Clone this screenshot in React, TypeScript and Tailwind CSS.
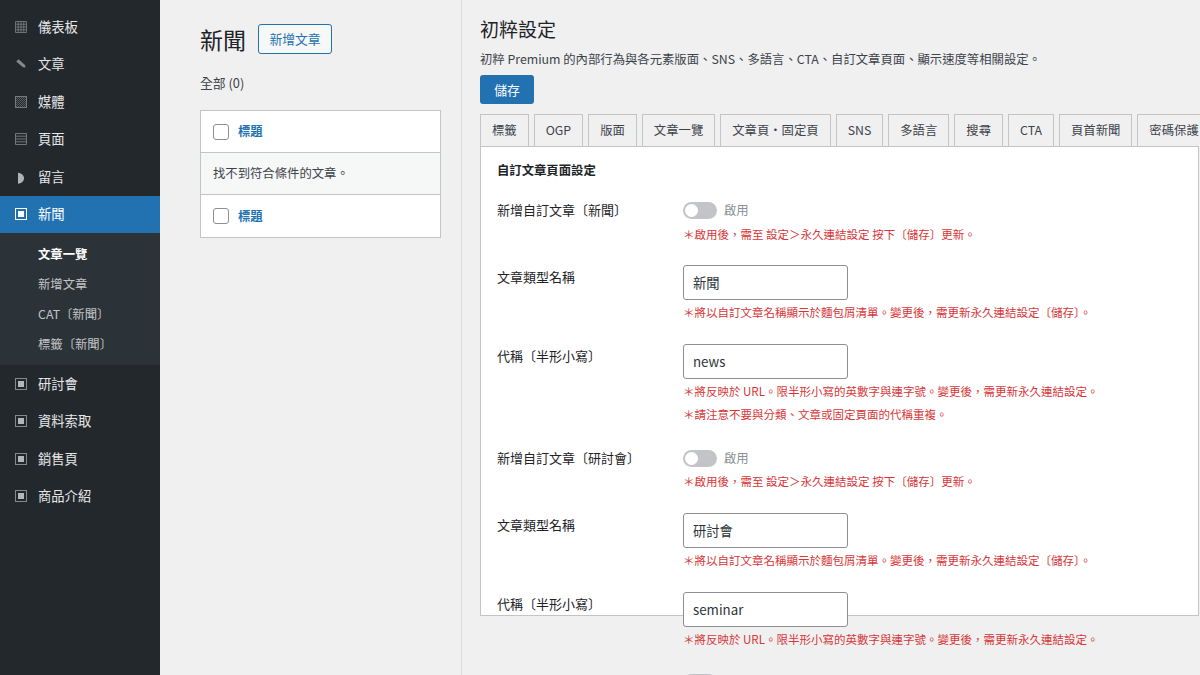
import React from 'react';

const FONT = "font-['Noto_Sans_CJK_TC','Noto_Sans',sans-serif]";

type IconKind = 'grid' | 'pen' | 'hatch' | 'lines' | 'half' | 'box';

const MenuIcon: React.FC<{ kind: IconKind; active?: boolean }> = ({ kind, active }) => {
  const c = active ? '#ffffff' : '#85888c';
  return (
    <svg width="12" height="12" viewBox="0 0 12 12" className="shrink-0 overflow-visible" fill="none">
      {kind === 'grid' && (
        <path
          d="M.5.5h11v11H.5zM.5 3.2h11M.5 6h11M.5 8.8h11M3.2.5v11M6 .5v11M8.8.5v11"
          stroke={c}
          opacity="0.75"
        />
      )}
      {kind === 'pen' && <path d="M1.2 3.6 3.6 1.2 10 7l.6 2.6L8 9.2z" fill={c} />}
      {kind === 'hatch' && (
        <>
          <rect x=".5" y=".5" width="11" height="11" stroke={c} opacity="0.8" />
          <path
            d="M0 2 2 0M0 4 4 0M0 6l6-6M0 8l8-8M0 10 10 0M1 11 11 1M2 12 12 2M4 12l8-8M6 12l6-6M8 12l4-4M10 12l2-2"
            stroke={c}
            strokeWidth="0.7"
            opacity="0.8"
          />
        </>
      )}
      {kind === 'lines' && (
        <path d="M.5.5h11v11H.5zM.5 3.2h11M.5 6h11M.5 8.8h11" stroke={c} opacity="0.8" />
      )}
      {kind === 'half' && <path d="M3 1.8C7 2.3 9 4.8 9 7.3s-2 5-6 5.5z" fill="#b0b3b6" />}
      {kind === 'box' && (
        <>
          <rect x=".5" y=".5" width="11" height="11" stroke={c} />
          <rect x="3" y="3" width="6" height="6" fill={active ? '#ffffff' : '#b4b7ba'} />
        </>
      )}
    </svg>
  );
};

const MenuItem: React.FC<{ label: string; kind: IconKind; active?: boolean }> = ({ label, kind, active }) => (
  <div
    className={`flex h-[37.5px] items-center pl-[15px] text-[13.3px] ${
      active ? 'bg-[#2271b1] text-white' : 'text-[#e6e7e8]'
    }`}
  >
    <MenuIcon kind={kind} active={active} />
    <span className="ml-[11px]">{label}</span>
  </div>
);

const Sidebar = () => (
  <aside className="h-full w-[160px] shrink-0 bg-[#23282d] pt-[8px]">
    <MenuItem label="儀表板" kind="grid" />
    <MenuItem label="文章" kind="pen" />
    <MenuItem label="媒體" kind="hatch" />
    <MenuItem label="頁面" kind="lines" />
    <MenuItem label="留言" kind="half" />
    <MenuItem label="新聞" kind="box" active />
    <div className="bg-[#2c3338] py-[6px] pl-[38px] text-[12.35px] text-[#c3c4c7]">
      <div className="flex h-[30px] items-center font-semibold text-white">文章一覽</div>
      <div className="flex h-[30px] items-center">新增文章</div>
      <div className="flex h-[30px] items-center">CAT〔新聞〕</div>
      <div className="flex h-[30px] items-center">標籤〔新聞〕</div>
    </div>
    <MenuItem label="研討會" kind="box" />
    <MenuItem label="資料索取" kind="box" />
    <MenuItem label="銷售頁" kind="box" />
    <MenuItem label="商品介紹" kind="box" />
  </aside>
);

const Checkbox = () => (
  <span className="h-[16px] w-[16px] rounded-[3px] border border-[#8c8f94] bg-white" />
);

const ListRow: React.FC<{ className?: string }> = ({ className }) => (
  <div className={`flex h-[42px] items-center gap-[9px] pl-[12px] ${className ?? ''}`}>
    <Checkbox />
    <span className="text-[12.35px] font-semibold text-[#2271b1]">標題</span>
  </div>
);

const NewsPane = () => (
  <section className="h-full w-[302px] shrink-0 border-r border-[#dcdcde] pl-[40px]">
    <div className="flex items-center pt-[24px]">
      <h1 className="text-[23px] leading-[29px] font-normal text-[#1d2327]">新聞</h1>
      <button className="ml-[12px] h-[30px] w-[74px] rounded-[3px] border border-[#2271b1] bg-[#f6f7f7] text-[12.8px] text-[#2271b1]">
        新增文章
      </button>
    </div>
    <p className="mt-[19px] text-[12.8px] leading-[20px] text-[#3c434a]">全部 (0)</p>
    <div className="mt-[17px] w-[241px] border border-[#c3c4c7] bg-white">
      <ListRow className="border-b border-[#c3c4c7]" />
      <div className="flex h-[42px] items-center border-b border-[#c3c4c7] bg-[#f6f7f7] pl-[12px] text-[12.35px] text-[#3c434a]">
        找不到符合條件的文章。
      </div>
      <ListRow />
    </div>
  </section>
);

const TABS = ['標籤', 'OGP', '版面', '文章一覽', '文章頁・固定頁', 'SNS', '多語言', '搜尋', 'CTA', '頁首新聞', '密碼保護'];

const Note: React.FC<{ children: React.ReactNode }> = ({ children }) => (
  <p className="mt-[2px] text-[11.5px] leading-[21px] whitespace-nowrap text-[#d63638]">{children}</p>
);

const Toggle: React.FC<{ label?: boolean }> = ({ label = true }) => (
  <div className="flex h-[19.5px] items-start">
    <span className="relative h-[17px] w-[34px] rounded-full bg-[#c3c4c7]">
      <span className="absolute top-[2px] left-[2px] h-[13px] w-[13px] rounded-full bg-white" />
    </span>
    {label && <span className="ml-[7px] text-[12.35px] leading-[17px] text-[#8c8f94]">啟用</span>}
  </div>
);

const TextField: React.FC<{ value: string }> = ({ value }) => (
  <input
    readOnly
    value={value}
    className="block h-[35px] w-[165px] rounded-[3px] border border-[#8c8f94] bg-white px-[9px] text-[13.3px] text-[#2c3338]"
  />
);

const Row: React.FC<{ label: string; top: string; labelTop: string; children: React.ReactNode }> = ({
  label,
  top,
  labelTop,
  children,
}) => (
  <div className={`flex ${top}`}>
    <div className={`w-[186px] shrink-0 text-[13px] leading-[20px] whitespace-nowrap text-[#1d2327] ${labelTop}`}>
      {label}
    </div>
    <div>{children}</div>
  </div>
);

const NOTE_ENABLE = '＊啟用後，需至 設定＞永久連結設定 按下〔儲存〕更新。';
const NOTE_NAME = '＊將以自訂文章名稱顯示於麵包屑清單。變更後，需更新永久連結設定〔儲存〕。';
const NOTE_SLUG = '＊將反映於 URL。限半形小寫的英數字與連字號。變更後，需更新永久連結設定。';

const SettingsPane = () => (
  <section className="h-full min-w-0 flex-1 pl-[18px]">
    <h2 className="pt-[15px] text-[19px] leading-[28px] font-normal text-[#1d2327]">初粹設定</h2>
    <p className="mt-[6px] text-[12.35px] leading-[20px] whitespace-nowrap text-[#3c434a]">
      初粹 Premium 的內部行為與各元素版面、SNS、多語言、CTA、自訂文章頁面、顯示速度等相關設定。
    </p>
    <button className="mt-[6px] block h-[29px] w-[54px] rounded-[3px] bg-[#2271b1] text-[12.8px] text-white">儲存</button>
    <div className="mt-[10px] flex gap-[5px]">
      {TABS.map((tab) => (
        <span
          key={tab}
          className="h-[32px] shrink-0 border border-b-0 border-[#c3c4c7] bg-[#f0f0f1] px-[11px] text-[12.35px] leading-[31px] whitespace-nowrap text-[#3c434a]"
        >
          {tab}
        </span>
      ))}
    </div>
    <div className="h-[470px] w-[719px] border border-[#c3c4c7] bg-white px-[16px] pt-[13px]">
      <h3 className="text-[12.35px] leading-[20px] font-semibold text-[#1d2327]">自訂文章頁面設定</h3>
      <Row label="新增自訂文章〔新聞〕" top="mt-[22px]" labelTop="-mt-[2px]">
        <Toggle />
        <Note>{NOTE_ENABLE}</Note>
      </Row>
      <Row label="文章類型名稱" top="mt-[20.8px]" labelTop="pt-[1.7px]">
        <TextField value="新聞" />
        <Note>{NOTE_NAME}</Note>
      </Row>
      <Row label="代稱〔半形小寫〕" top="mt-[20.7px]" labelTop="pt-[2px]">
        <TextField value="news" />
        <Note>{NOTE_SLUG}</Note>
        <Note>＊請注意不要與分類、文章或固定頁面的代稱重複。</Note>
      </Row>
      <Row label="新增自訂文章〔研討會〕" top="mt-[25px]" labelTop="-mt-[2px]">
        <Toggle />
        <Note>{NOTE_ENABLE}</Note>
      </Row>
      <Row label="文章類型名稱" top="mt-[20.8px]" labelTop="pt-[1.7px]">
        <TextField value="研討會" />
        <Note>{NOTE_NAME}</Note>
      </Row>
      <Row label="代稱〔半形小寫〕" top="mt-[20.7px]" labelTop="pt-[2px]">
        <TextField value="seminar" />
        <Note>{NOTE_SLUG}</Note>
      </Row>
      <Row label="" top="mt-[24px]" labelTop="">
        <Toggle label={false} />
      </Row>
    </div>
  </section>
);

export default function App() {
  return (
    <div lang="zh-TW" className={`flex h-[675px] w-[1200px] overflow-hidden bg-[#f0f0f1] ${FONT}`}>
      <Sidebar />
      <NewsPane />
      <SettingsPane />
    </div>
  );
}
